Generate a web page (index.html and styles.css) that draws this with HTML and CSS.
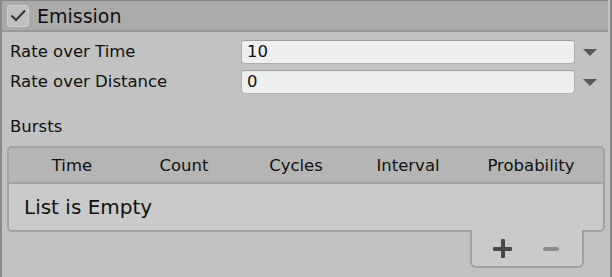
FILE: index.html
```html
<!DOCTYPE html>
<html>
<head>
<meta charset="utf-8">
<link rel="stylesheet" href="styles.css">
</head>
<body>
<div class="panel">
  <div class="module-header">
    <span class="checkbox">
      <svg width="22" height="22" viewBox="0 0 22 22"><path d="M4.5 10.5 L9 15 L18 5.5" fill="none" stroke="#333" stroke-width="2"/></svg>
    </span>
    <span class="module-title">Emission</span>
  </div>
  <div class="module-body">
    <div class="field-row">
      <span class="field-label">Rate over Time</span>
      <span class="field-input">10</span>
      <span class="curve-toggle"></span>
    </div>
    <div class="field-row">
      <span class="field-label">Rate over Distance</span>
      <span class="field-input">0</span>
      <span class="curve-toggle"></span>
    </div>
    <div class="bursts-label">Bursts</div>
    <div class="list">
      <div class="list-header">
        <span>Time</span><span>Count</span><span>Cycles</span><span>Interval</span><span>Probability</span>
      </div>
      <div class="list-body">List is Empty</div>
      <div class="list-footer">
        <div class="footer-buttons">
          <span class="btn-plus"></span>
          <span class="btn-minus"></span>
        </div>
      </div>
    </div>
  </div>
</div>
</body>
</html>
```
FILE: styles.css
```css
html, body {
  margin: 0;
  padding: 0;
  background: #c2c2c2;
}
body {
  font-family: "DejaVu Sans", sans-serif;
  color: #111;
}
.panel {
  width: 612px;
  height: 277px;
  box-sizing: border-box;
  border-left: 2px solid #8a8a8a;
  border-right: 2px solid #8f8f8f;
  background: #c2c2c2;
}
.module-header {
  height: 32px;
  box-sizing: border-box;
  background: #ababab;
  border-top: 1px solid #858585;
  border-bottom: 2px solid #989898;
  display: flex;
  align-items: center;
  padding-left: 5px;
  margin-right: 2px;
}
.checkbox {
  width: 22px;
  height: 22px;
  box-sizing: border-box;
  border: 1px solid #cdcdcd;
  border-radius: 3px;
  background: #c0c0c0;
  display: block;
  position: relative;
}
.checkbox svg {
  position: absolute;
  left: -1px;
  top: -1px;
}
.module-title {
  margin-left: 8px;
  font-size: 19px;
  line-height: 22px;
}
.module-body {
  padding: 8px 0 0 8px;
}
.field-row {
  display: flex;
  align-items: center;
  height: 24px;
  margin-bottom: 6px;
}
.field-label {
  width: 231px;
  font-size: 16.5px;
  line-height: 22px;
}
.field-input {
  width: 334px;
  height: 24px;
  box-sizing: border-box;
  background: #efefef;
  border: 1px solid #b0b0b0;
  border-top-color: #9c9c9c;
  border-radius: 4px;
  padding-left: 5px;
  font-size: 16.5px;
  line-height: 22px;
}
.curve-toggle {
  margin-left: 8px;
  width: 0;
  height: 0;
  border-left: 7px solid transparent;
  border-right: 7px solid transparent;
  border-top: 7px solid #595959;
}
.bursts-label {
  margin-top: 22px;
  font-size: 16.5px;
  line-height: 22px;
}
.list {
  margin-top: 8px;
  margin-left: -3px;
  width: 598px;
}
.list-header {
  height: 38px;
  box-sizing: border-box;
  background: #b5b5b5;
  border: 2px solid #a2a2a2;
  border-radius: 5px 5px 0 0;
  display: grid;
  grid-template-columns: 112px 112px 112px 112px 1fr;
  align-items: center;
  padding: 0 5px 0 7px;
  font-size: 16.5px;
}
.list-header span {
  text-align: center;
}
.list-body {
  height: 48px;
  box-sizing: border-box;
  background: #cacaca;
  border: 2px solid #a2a2a2;
  border-top: none;
  border-radius: 0 0 5px 5px;
  display: flex;
  align-items: center;
  padding-left: 15px;
  font-size: 20px;
}
.list-footer {
  display: flex;
  justify-content: flex-end;
  padding-right: 21px;
  margin-top: -2px;
}
.footer-buttons {
  width: 114px;
  height: 38px;
  box-sizing: border-box;
  background: #cacaca;
  border: 2px solid #a2a2a2;
  border-top: none;
  border-radius: 0 0 6px 6px;
  display: flex;
  align-items: center;
  padding-left: 21px;
  gap: 31px;
}
.btn-plus {
  width: 19px;
  height: 19px;
  position: relative;
  display: block;
}
.btn-plus::before,
.btn-plus::after {
  content: "";
  position: absolute;
  background: #474747;
  border-radius: 1px;
}
.btn-plus::before {
  left: 0;
  top: 8px;
  width: 19px;
  height: 4px;
}
.btn-plus::after {
  left: 8px;
  top: 0;
  width: 4px;
  height: 19px;
}
.btn-minus {
  width: 16px;
  height: 4px;
  border-radius: 2px;
  background: #8c8c8c;
  display: block;
  margin-top: 1px;
}
```
